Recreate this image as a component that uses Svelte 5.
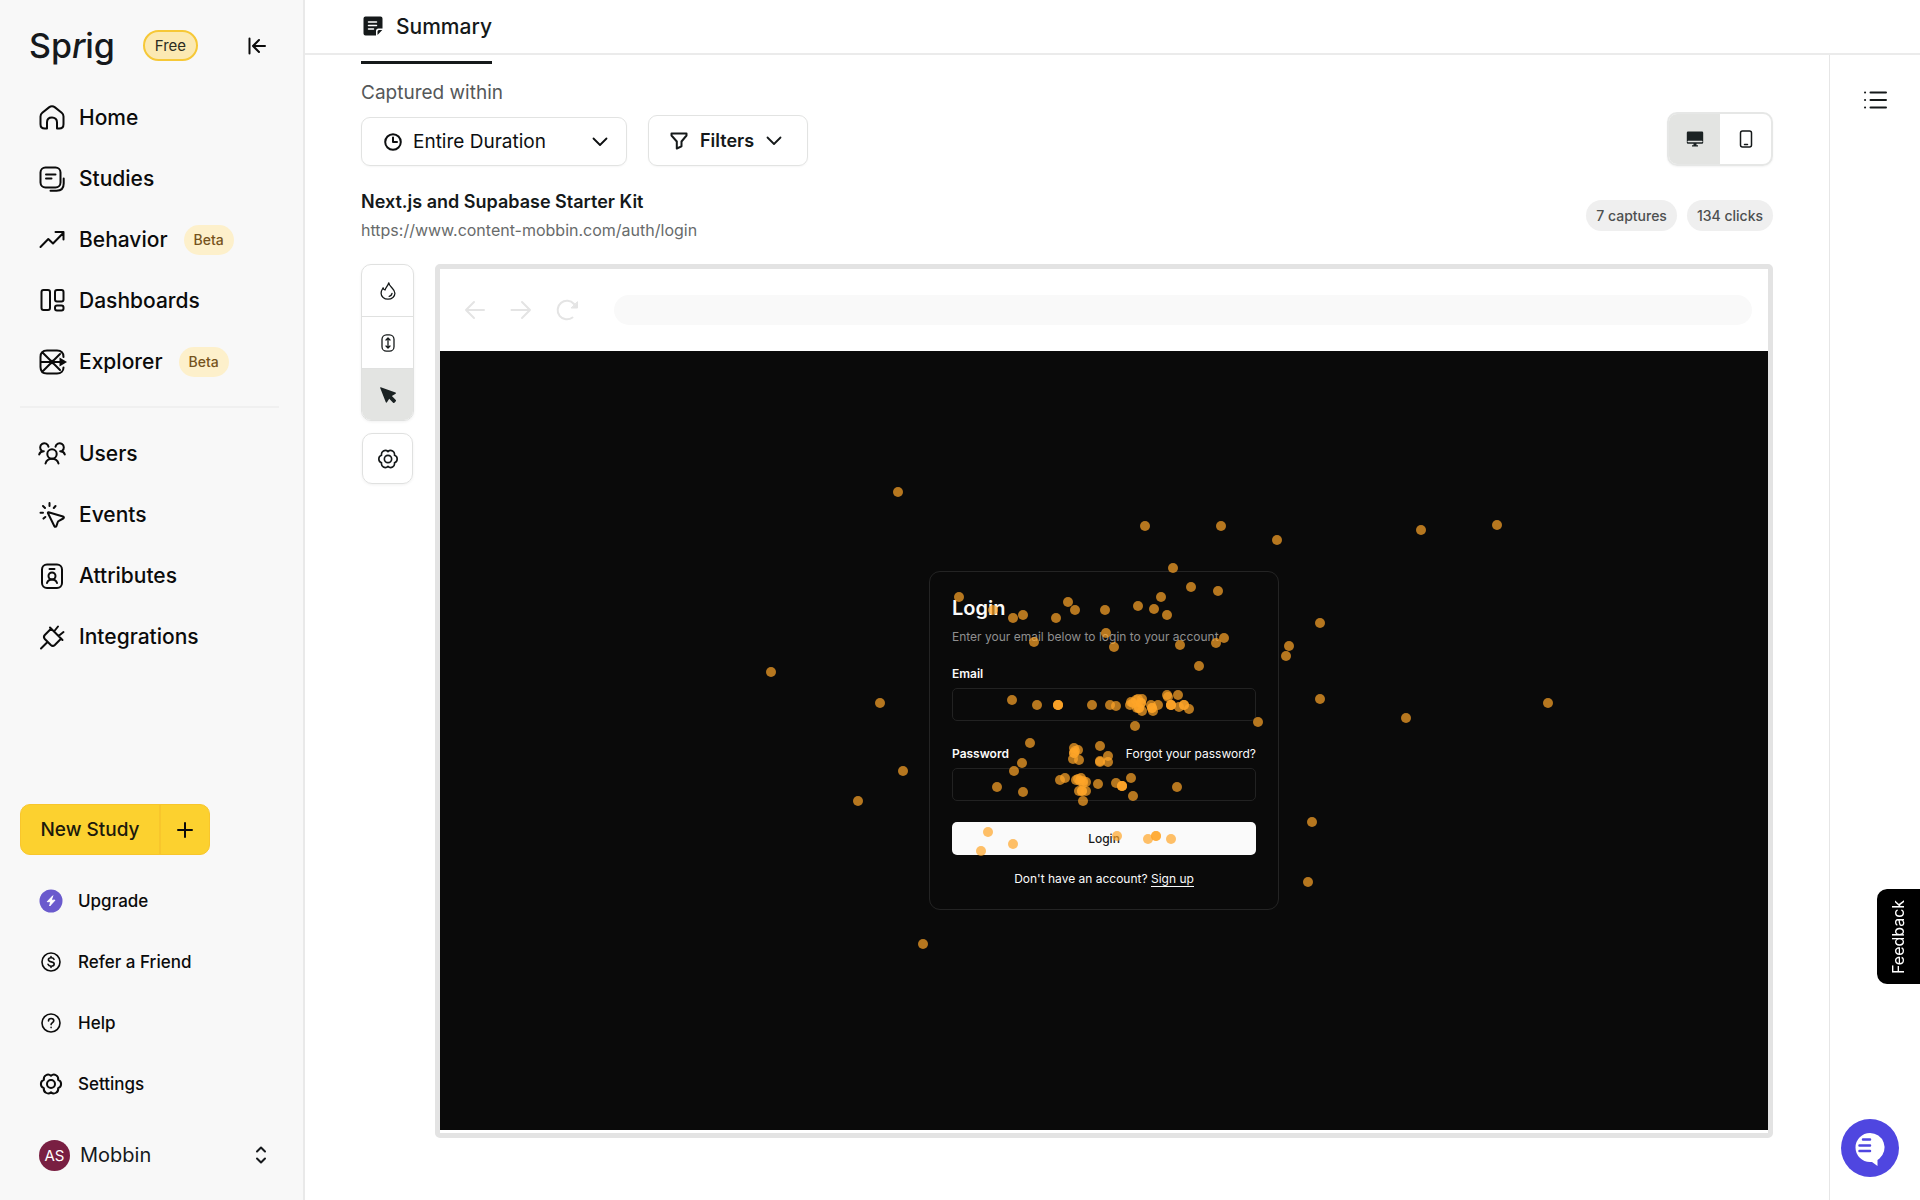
<script lang="ts">
  type Point = [x: number, y: number, hits?: number];

  const mainNav = [
    { label: 'Home', icon: 'home', beta: false },
    { label: 'Studies', icon: 'studies', beta: false },
    { label: 'Behavior', icon: 'behavior', beta: true },
    { label: 'Dashboards', icon: 'dashboards', beta: false },
    { label: 'Explorer', icon: 'explorer', beta: true },
  ];

  const dataNav = [
    { label: 'Users', icon: 'users', beta: false },
    { label: 'Events', icon: 'events', beta: false },
    { label: 'Attributes', icon: 'attributes', beta: false },
    { label: 'Integrations', icon: 'integrations', beta: false },
  ];

  const footerNav = [
    { label: 'Upgrade', icon: 'upgrade' },
    { label: 'Refer a Friend', icon: 'refer' },
    { label: 'Help', icon: 'help' },
    { label: 'Settings', icon: 'gear' },
  ];

  const tools = [
    { id: 'heat', label: 'Heatmap' },
    { id: 'scroll', label: 'Scroll depth' },
    { id: 'clicks', label: 'Clicks' },
  ];

  let tool = $state('clicks');
  let device = $state('desktop');
  let duration = $state('Entire Duration');

  // Recorded clicks, in captured-page pixels. Third value = repeated clicks.
  const STAGE_W = 1328;
  const STAGE_H = 779;
  const clicks: Point[] = [
    [458, 141], [705, 175], [781, 175], [837, 189], [981, 179], [1057, 174],
    [880, 272], [849, 295], [846, 305], [880, 348], [966, 367], [1108, 352],
    [331, 321], [440, 352], [463, 420], [418, 450], [872, 471], [868, 531], [483, 593],
    // heading and description
    [733, 217], [751, 236], [778, 240], [519, 246], [553, 259], [573, 267], [583, 264],
    [616, 267], [628, 251], [635, 259], [665, 259], [698, 255], [714, 258], [721, 246],
    [727, 264], [666, 282], [674, 296], [594, 291], [740, 294], [776, 292], [784, 287], [759, 315],
    // email field
    [572, 349], [597, 354], [618, 354, 3], [652, 354], [670, 354], [676, 355],
    [690, 354], [691, 351], [696, 349], [698, 348], [702, 348], [701, 352, 2], [699, 357, 2],
    [697, 357], [702, 360], [693, 352], [711, 354], [712, 357, 2], [713, 360], [718, 354],
    [727, 344], [728, 346], [738, 344], [731, 354, 3], [739, 356], [744, 354, 2], [749, 358],
    [695, 375], [818, 371],
    // password field
    [590, 392], [582, 412], [574, 420], [557, 436], [583, 441],
    [634, 397], [638, 399], [634, 402, 2], [635, 400], [633, 408], [639, 409],
    [660, 395], [660, 410], [660, 411], [668, 405], [668, 411],
    [620, 429], [625, 427], [636, 429], [638, 428], [641, 427], [643, 430], [646, 431],
    [640, 430], [643, 432], [639, 440], [642, 440, 2], [646, 440], [643, 450],
    [658, 433], [676, 432], [682, 435, 3], [691, 427], [693, 445], [737, 436],
    // submit button
    [548, 481], [573, 493], [541, 500], [677, 485], [708, 488], [716, 485, 2], [731, 488],
  ];

  const dots = clicks.flatMap(([x, y, hits = 1]) => Array.from({ length: hits }, () => ({ x, y })));
</script>

{#snippet gear()}
  <path d="M12 3.8A4.3 4.3 0 0 1 19.1 7.9A4.3 4.3 0 0 1 19.1 16.1A4.3 4.3 0 0 1 12 20.2A4.3 4.3 0 0 1 4.9 16.1A4.3 4.3 0 0 1 4.9 7.9A4.3 4.3 0 0 1 12 3.8Z" />
  <circle cx="12" cy="12" r="4" />
{/snippet}

{#snippet navIcon(name: string)}
  <svg class="icon" viewBox="0 0 26 26" aria-hidden="true">
    {#if name === 'home'}
      <path d="M1.5 11.5c0-1.5.6-2.7 1.8-3.7l6.7-5.400c1.800-1.400 4.200-1.400 6 0l6.700 5.400c1.200 1 1.800 2.200 1.800 3.700v7.700c0 2.800-1.800 4.300-4.300 4.300H18v-6.200c0-2.900-2-4.800-5-4.800s-5 1.900-5 4.800v6.200H5.800c-2.500 0-4.300-1.500-4.300-4.300Z" />
    {:else if name === 'studies'}
      <rect x="1.5" y="1.500" width="20" height="20" rx="5" />
      <path d="M7 8.500h9.500M7 12.500h5.500M24.700 12.500v5c0 4.500-2.700 7.200-7.200 7.200h-6" />
    {:else if name === 'behavior'}
      <path d="m1.500 20 7.800-8 4.700 4.500L24 6.200M16.500 5H24.500v7.500" />
    {:else if name === 'dashboards'}
      <rect x="2.500" y="2" width="8.500" height="20" rx="2" />
      <rect x="16" y="2" width="8.500" height="11.500" rx="2" />
      <rect x="16" y="17.500" width="8.500" height="5" rx="2" />
    {:else if name === 'explorer'}
      <path d="M24.500 8C24.500 4 22 1.500 18 1.500H8c-4 0-6.500 2.500-6.500 6.500v10c0 4 2.500 6.500 6.500 6.500h10c4 0 6.500-2.500 6.500-6M1.500 13H22M3.500 3.500l7.500 7.500q2 2 4 0L21 5M3.500 22.500l7.500-7.500q2-2 4 0L21 21" />
      <path class="solid" d="m20.500 8.500 7.500 4.500-7.500 4.500Z" />
    {:else if name === 'users'}
      <circle cx="13" cy="13" r="4.700" />
      <path d="M6.500 22.500C7.300 19.500 9.500 17.700 13 17.700s5.700 1.800 6.500 4.800M2.800 9.800A4.200 4.200 0 1 1 9.500 5.700M.2 13.500c.5-2 1.900-3.200 4.600-3.300M23.200 9.800a4.200 4.200 0 1 0-6.700-4.100M25.800 13.500c-.5-2-1.900-3.200-4.600-3.300" />
    {:else if name === 'events'}
      <path d="M9.500 10.200 24 14.500c1.200.4 1.200 1.500.2 2l-4.300 2.300c-.6.3-1 .8-1.200 1.400l-1.300 3.900c-.4 1-1.500 1-2 .1L9 11.300c-.3-.7 0-1.200.5-1.100ZM10.500 1V4M16.500 4l-1.700 2M4 4l2 2M1.500 10.700H4M6.300 15l-1.800 1.600" />
    {:else if name === 'attributes'}
      <rect x="3" y="1.500" width="20" height="23.500" rx="5" />
      <circle cx="13" cy="13" r="3.500" />
      <path d="M8 20c.8-2.300 2.500-3.400 5-3.400s4.200 1.100 5 3.400M10.500 6h5" />
    {:else if name === 'integrations'}
      <path d="m2 24.500 6-6M11 3.500 23.500 16M12 4.800 5.800 11q-1.800 2 0 4l6 6q2 1.800 4 0L22 14.800M15 7.500l4-5M19.500 12l5-4" />
    {:else if name === 'upgrade'}
      <circle class="purple" cx="13" cy="13" r="11.500" />
      <path class="white" d="m14.600 8-5.400 5.700h3.400l-.9 4.300 5.300-5.800h-3.400Z" />
    {:else if name === 'refer'}
      <g class="thin">
        <circle cx="13" cy="13" r="9" />
        <path d="M16 10.300c-.4-1-1.300-1.500-2.800-1.500-1.700 0-2.800.7-2.800 2 0 3.100 5.800 1 5.800 4.200 0 1.400-1.200 2.200-3 2.200-1.700 0-2.800-.7-3.200-1.900M13 7.500v1.300M13 17.200v1.300" />
      </g>
    {:else if name === 'help'}
      <g class="thin">
        <circle cx="13" cy="13" r="9" />
        <path d="M10.500 11c0-1.500 1-2.500 2.600-2.500s2.700.9 2.700 2.300c0 1.900-2.700 1.900-2.700 3.800M13.100 17.400v.2" />
      </g>
    {:else if name === 'gear'}
      <g class="gear" transform="translate(1 1)">{@render gear()}</g>
    {/if}
  </svg>
{/snippet}

{#snippet navList(items: typeof mainNav)}
  <ul>
    {#each items as item}
      <li>
        <a class="nav-link" href="#{item.icon}">
          {@render navIcon(item.icon)}
          <span>{item.label}</span>
          {#if item.beta}<span class="beta">Beta</span>{/if}
        </a>
      </li>
    {/each}
  </ul>
{/snippet}

{#snippet chevron()}
  <svg class="chevron" viewBox="0 0 16 16" aria-hidden="true"><path d="m1.500 4.500 6.500 6.500 6.500-6.500" /></svg>
{/snippet}

<div class="app">
  <aside class="sidebar">
    <div class="brand">
      <a class="logo" href="#home">Sp<i>r</i>ig</a>
      <span class="plan">Free</span>
      <button class="collapse" aria-label="Collapse sidebar">
        <svg viewBox="0 0 18 18" aria-hidden="true"><path d="M1.500 1.500v15M17 9H5.500M11 3 5 9l6 6" /></svg>
      </button>
    </div>

    <nav aria-label="Main">
      {@render navList(mainNav)}
      <hr />
      {@render navList(dataNav)}
    </nav>

    <div class="sidebar-foot">
      <div class="new-study">
        <button class="new-main">New Study</button>
        <button class="new-plus" aria-label="Add">
          <svg viewBox="0 0 16 16" aria-hidden="true"><path d="M8 1v14M1 8h14" /></svg>
        </button>
      </div>
      <ul>
        {#each footerNav as item}
          <li>
            <a class="foot-link" href="#{item.icon}">{@render navIcon(item.icon)}<span>{item.label}</span></a>
          </li>
        {/each}
      </ul>
      <button class="account">
        <span class="avatar">AS</span>
        <span>Mobbin</span>
        <svg viewBox="0 0 12 18" aria-hidden="true"><path d="m2 5.500 4-4 4 4M2 12.500l4 4 4-4" /></svg>
      </button>
    </div>
  </aside>

  <div class="page">
    <header class="tabs">
      <a class="tab" href="#summary">
        <svg viewBox="0 0 20 20" aria-hidden="true">
          <path class="sheet" d="M2.500.5h15a2 2 0 0 1 2 2v10h-4a2.500 2.500 0 0 0-2.500 2.500v4.500H2.500a2 2 0 0 1-2-2v-15a2 2 0 0 1 2-2ZM14.500 19v-3.500a1.500 1.500 0 0 1 1.500-1.500h3.300Z" />
          <path class="lines" d="M5.500 6h8M5.500 9.500h8M5.500 13h5" />
        </svg>
        <span>Summary</span>
      </a>
    </header>

    <div class="body">
      <main>
        <div class="controls">
          <div class="field">
            <label for="duration">Captured within</label>
            <div class="select">
              <svg viewBox="0 0 18 18" aria-hidden="true"><circle cx="9" cy="9" r="7.800" /><path d="M9 4.500V9h4" /></svg>
              <select id="duration" bind:value={duration}>
                <option>Entire Duration</option>
              </select>
              {@render chevron()}
            </div>
          </div>
          <button class="filters">
            <svg class="funnel" viewBox="0 0 18 18" aria-hidden="true">
              <path d="M1.500 1.500h15v2L11.500 9.500v4.800L6.800 16.500v-7L1.500 3.500Z" />
            </svg>
            <span>Filters</span>
            {@render chevron()}
          </button>
          <div class="devices" role="group" aria-label="Device">
            <button aria-label="Desktop" aria-pressed={device === 'desktop'} onclick={() => (device = 'desktop')}>
              <svg viewBox="0 0 18 18" aria-hidden="true">
                <path class="ink" d="M2 1.500h14a1.200 1.200 0 0 1 1.200 1.200v9.800a1.200 1.200 0 0 1-1.200 1.200h-5.500v1.500h1.500v1.300H6v-1.300h1.500v-1.500H2A1.200 1.200 0 0 1 .8 12.500V2.700A1.200 1.200 0 0 1 2 1.500Z" />
                <path class="gap" d="M2.200 11.600h13.600" />
              </svg>
            </button>
            <button aria-label="Mobile" aria-pressed={device === 'mobile'} onclick={() => (device = 'mobile')}>
              <svg viewBox="0 0 18 18" aria-hidden="true">
                <rect x="3.500" y="1" width="11" height="16" rx="2" />
                <path d="M7.500 14.500h3" />
              </svg>
            </button>
          </div>
        </div>

        <div class="heading">
          <div>
            <h1>Next.js and Supabase Starter Kit</h1>
            <p>https://www.content-mobbin.com/auth/login</p>
          </div>
          <div class="chips">
            <span class="chip">7 captures</span>
            <span class="chip">134 clicks</span>
          </div>
        </div>

        <div class="viewer">
          <div class="tools">
            <div class="tool-group" role="group" aria-label="Map type">
              {#each tools as t}
                <button aria-label={t.label} aria-pressed={tool === t.id} onclick={() => (tool = t.id)}>
                  <svg viewBox="0 0 18 18" aria-hidden="true">
                    {#if t.id === 'heat'}
                      <path d="M9.800.8c.2 2.300 1.700 3.500 3.300 5.200 1.700 1.800 2.800 3.300 2.800 5.200 0 3.500-3 6-6.900 6s-6.900-2.500-6.900-6C2.100 8.800 3.200 7.200 4.100 5.800c.3 1.200.9 1.900 1.900 2.200C6.800 5.200 8.900 4 9.800.8Z" />
                      <path d="M13 11.500c-.3 1.500-1.300 2.500-2.800 2.800" />
                    {:else if t.id === 'scroll'}
                      <rect x="3" y=".8" width="12" height="16.400" rx="4.500" />
                      <path d="M9 4.200v9.600M7 6l2-2 2 2M7 12l2 2 2-2" />
                    {:else}
                      <path class="ink" d="M1.800 1.200 16.500 6.500c.6.300.6.900.1 1.200l-3.700 2.400 3.900 3.900c.4.4.4.900 0 1.300l-1.400 1.400c-.4.4-.9.400-1.300 0l-3.900-3.900L8 16.300c-.3.500-1 .5-1.200-.1L1.200 2c-.2-.6.1-1 .6-.8Z" />
                    {/if}
                  </svg>
                </button>
              {/each}
            </div>
            <button class="tool-settings" aria-label="Map settings">
              <svg viewBox="1 1 22 22" aria-hidden="true">{@render gear()}</svg>
            </button>
          </div>

          <div class="frame">
            <div class="browser-bar">
              <svg viewBox="0 0 22 22" aria-hidden="true"><path d="M20 11H2M10 3l-8 8 8 8" /></svg>
              <svg viewBox="0 0 22 22" aria-hidden="true"><path d="M1.500 11H20M12 3l8 8-8 8" /></svg>
              <svg viewBox="0 0 22 22" aria-hidden="true">
                <path d="M16.500 18.500A9.300 9.300 0 1 1 18 5" />
                <path class="head" d="M21.500 3v6h-6Z" />
              </svg>
              <div class="address"></div>
            </div>

            <div class="stage">
              <form class="login" onsubmit={(e) => e.preventDefault()}>
                <h2>Login</h2>
                <p class="hint">Enter your email below to login to your account</p>
                <div class="row"><label for="email">Email</label></div>
                <input id="email" type="email" />
                <div class="row">
                  <label for="password">Password</label>
                  <a href="#forgot">Forgot your password?</a>
                </div>
                <input id="password" type="password" />
                <button>Login</button>
                <p class="signup">Don't have an account? <a href="#signup">Sign up</a></p>
              </form>

              <svg class="dots" viewBox="0 0 {STAGE_W} {STAGE_H}" aria-hidden="true">
                {#each dots as dot}
                  <circle cx={dot.x} cy={dot.y} r="5" />
                {/each}
              </svg>
            </div>
          </div>
        </div>
      </main>

      <div class="rail">
        <button aria-label="Show list">
          <svg viewBox="0 0 24 20" aria-hidden="true">
            <path d="M7.500 2.500H23M7.500 10H23M7.500 17.500H23M2 2.500h.1M2 10h.1M2 17.500h.1" />
          </svg>
        </button>
      </div>
    </div>
  </div>

  <button class="feedback">Feedback</button>
  <button class="chat" aria-label="Open chat">
    <svg viewBox="0 0 58 58" aria-hidden="true">
      <path class="bubble" d="M29 14a14.500 14.500 0 0 1 9.500 25.500L36.500 41v6L31 43h-2a14.500 14.500 0 0 1 0-29Z" />
      <path class="bars" d="M22 20.500h7M18.500 26.500h10.500M18.500 32h10.500" />
    </svg>
  </button>
</div>

<style>
  :global(body) {
    background: #fff;
  }

  .app {
    display: flex;
    min-height: 100vh;
    font-family: Inter, 'Liberation Sans', sans-serif;
    color: #15191a;
  }

  .app * {
    box-sizing: border-box;
  }

  button,
  select,
  input {
    font: inherit;
    color: inherit;
  }

  button {
    padding: 0;
    border: 0;
    background: none;
    cursor: pointer;
  }

  a {
    color: inherit;
    text-decoration: none;
  }

  ul,
  p,
  h1,
  h2 {
    margin: 0;
    padding: 0;
    list-style: none;
  }

  svg {
    display: block;
    flex: none;
    fill: none;
    stroke: currentColor;
    stroke-width: 2;
    stroke-linecap: round;
    stroke-linejoin: round;
  }

  /* Sidebar */
  .sidebar {
    position: sticky;
    top: 0;
    display: flex;
    flex-direction: column;
    flex: none;
    width: 305px;
    height: 100vh;
    padding: 20px 24px 21px 20px;
    border-right: 2px solid #e9e9e9;
    background: #f8f8f8;
    color: #0b0b0b;
  }

  .brand {
    display: flex;
    align-items: center;
    height: 51px;
    padding: 0 13px 0 9px;
    margin-bottom: 16px;
  }

  .logo {
    font-size: 34px;
    line-height: 40px;
    font-weight: 500;
    color: #16191c;
  }

  .plan {
    margin-left: 28px;
    padding: 0 10px;
    border: 2px solid #f6c837;
    border-radius: 16px;
    background: #fbe9b2;
    font-size: 15px;
    line-height: 27px;
    color: #2c2c22;
  }

  .collapse {
    margin-left: auto;
  }

  .collapse svg {
    width: 18px;
    height: 18px;
  }

  .nav-link,
  .foot-link {
    display: flex;
    align-items: center;
    height: 61px;
  }

  .nav-link {
    gap: 14px;
    padding-left: 19px;
    font-size: 21px;
    font-weight: 500;
  }

  .icon {
    width: 26px;
    height: 26px;
    overflow: visible;
  }

  .icon .solid {
    fill: currentColor;
    stroke: none;
  }

  .icon .purple {
    fill: #6a5acd;
    stroke: none;
  }

  .icon .white {
    fill: #fff;
    stroke: #fff;
    stroke-width: 1;
  }

  .icon .thin {
    stroke-width: 1.6;
  }

  .beta {
    padding: 0 10px;
    margin-left: 2px;
    border-radius: 15px;
    background: #fdf0cb;
    font-size: 14px;
    line-height: 30px;
    color: #76531c;
  }

  hr {
    height: 2px;
    margin: 14px 0 15px;
    border: 0;
    background: #f0f0f0;
  }

  .sidebar-foot {
    margin-top: auto;
  }

  .new-study {
    display: inline-flex;
    height: 51px;
    margin-bottom: 15px;
    border: 1px solid #f8c62c;
    border-radius: 10px;
    background: #fcd12f;
    overflow: hidden;
    vertical-align: top;
  }

  .new-main {
    width: 140px;
    border-right: 2px solid #f8c62c;
    font-size: 19px;
    font-weight: 500;
    color: #1d1a0c;
  }

  .new-plus {
    display: grid;
    place-items: center;
    width: 48px;
  }

  .new-plus svg {
    width: 16px;
    height: 16px;
  }

  .foot-link {
    gap: 14px;
    padding-left: 18px;
    font-size: 17px;
    font-weight: 500;
  }

  .account {
    display: flex;
    align-items: center;
    gap: 10px;
    width: 100%;
    height: 48px;
    padding: 0 12px 0 19px;
    margin-top: 17px;
    font-size: 20px;
    color: #16191c;
  }

  .account svg {
    width: 12px;
    height: 18px;
    margin-left: auto;
  }

  .avatar {
    display: grid;
    place-items: center;
    width: 31px;
    height: 31px;
    border-radius: 50%;
    background: #791f42;
    font-size: 15px;
    color: #fff;
  }

  /* Header tabs */
  .page {
    display: flex;
    flex-direction: column;
    flex: 1;
    min-width: 0;
  }

  .tabs {
    display: flex;
    align-items: flex-start;
    height: 55px;
    padding-left: 56px;
    border-bottom: 2px solid #ebebeb;
  }

  .tab {
    display: flex;
    align-items: center;
    gap: 13px;
    height: 64px;
    padding: 0 0 9px 2px;
    border-bottom: 3px solid #15191a;
    font-size: 21px;
    font-weight: 500;
  }

  .tab svg {
    width: 20px;
    height: 20px;
  }

  .tab .sheet {
    fill: #15191a;
    stroke: none;
  }

  .tab .lines {
    stroke: #fff;
    stroke-width: 1.5;
  }

  .body {
    display: flex;
    flex: 1;
  }

  main {
    flex: 1;
    min-width: 0;
    padding: 26px 56px 40px;
  }

  /* Filter row */
  .controls {
    display: flex;
    align-items: flex-end;
  }

  .field {
    display: flex;
    flex-direction: column;
    gap: 12px;
    width: 266px;
  }

  .field label {
    font-size: 19px;
    line-height: 24px;
    color: #555859;
  }

  .select {
    display: flex;
    align-items: center;
    gap: 11px;
    height: 49px;
    padding: 0 18px 0 22px;
    border: 1px solid #e2e3e2;
    border-radius: 9px;
    box-shadow: 0 1px 2px rgba(0, 0, 0, 0.04);
    color: #0d0f10;
  }

  .select svg,
  .funnel {
    width: 18px;
    height: 18px;
  }

  .select select {
    flex: 1;
    min-width: 0;
    padding: 0;
    border: 0;
    background: none;
    appearance: none;
    font-size: 19px;
    line-height: 24px;
  }

  .select .chevron,
  .filters .chevron {
    width: 16px;
    height: 16px;
    stroke-width: 1.8;
  }

  .filters {
    display: flex;
    align-items: center;
    gap: 12px;
    width: 160px;
    height: 51px;
    padding: 0 0 0 21px;
    margin-left: 21px;
    border: 1px solid #e2e3e2;
    border-radius: 9px;
    box-shadow: 0 1px 2px rgba(0, 0, 0, 0.04);
    font-size: 18px;
    font-weight: 600;
  }

  .devices {
    display: flex;
    width: 106px;
    height: 54px;
    margin-left: auto;
    border: 2px solid #e6e7e6;
    border-radius: 10px;
    box-shadow: 0 1px 2px rgba(0, 0, 0, 0.05);
    overflow: hidden;
  }

  .devices button {
    display: grid;
    place-items: center;
    flex: 1;
  }

  .devices svg {
    width: 18px;
    height: 18px;
    stroke-width: 1.5;
  }

  button[aria-pressed='true'] {
    background: #e3e4e2;
  }

  svg .ink {
    fill: #1b2223;
    stroke: none;
  }

  .devices .gap {
    stroke: #e3e4e2;
  }

  .heading {
    display: flex;
    align-items: center;
    justify-content: space-between;
    margin: 22px 0 20px;
  }

  h1 {
    font-size: 18px;
    line-height: 28px;
    font-weight: 600;
  }

  .heading p {
    font-size: 16px;
    line-height: 28px;
    color: #686b6b;
  }

  .chips {
    display: flex;
    gap: 10px;
    padding-bottom: 2px;
  }

  .chip {
    padding: 0 10px;
    border-radius: 16px;
    background: #efefef;
    font-size: 14px;
    line-height: 31px;
    font-weight: 500;
    color: #4d5050;
  }

  /* Capture viewer */
  .viewer {
    display: flex;
    align-items: flex-start;
    gap: 21px;
  }

  .tools {
    display: flex;
    flex-direction: column;
    align-items: center;
    gap: 12px;
    width: 53px;
    flex: none;
  }

  .tool-group {
    display: flex;
    flex-direction: column;
    width: 100%;
    height: 157px;
    border: 1px solid #e0e1e0;
    border-radius: 10px;
    box-shadow: 0 1px 3px rgba(0, 0, 0, 0.06);
    overflow: hidden;
  }

  .tools button {
    display: grid;
    place-items: center;
  }

  .tool-group button {
    flex: 1;
  }

  .tool-group button + button {
    border-top: 1px solid #e0e1e0;
  }

  .tools svg {
    width: 18px;
    height: 18px;
    stroke-width: 1.3;
  }

  .tools .tool-settings {
    width: 51px;
    height: 51px;
    border: 1px solid #e0e1e0;
    border-radius: 10px;
    box-shadow: 0 1px 3px rgba(0, 0, 0, 0.06);
  }

  .tools .tool-settings svg {
    width: 20px;
    height: 20px;
    stroke-width: 1.8;
  }

  .frame {
    flex: 1;
    min-width: 0;
    padding-bottom: 3px;
    border: 5px solid #e3e3e3;
    border-radius: 5px;
  }

  .browser-bar {
    display: flex;
    align-items: center;
    gap: 24px;
    height: 82px;
    padding: 0 16px 0 24px;
    color: #e4e4e4;
  }

  .browser-bar svg {
    width: 22px;
    height: 22px;
  }

  .browser-bar .head {
    fill: currentColor;
    stroke-width: 1;
  }

  .address {
    flex: 1;
    height: 30px;
    margin-left: 12px;
    border-radius: 15px;
    background: #f9f9f9;
  }

  .stage {
    position: relative;
    display: grid;
    place-items: center;
    aspect-ratio: 1328 / 779;
    background: #0a0a0a;
    color: #fafafa;
  }

  .dots {
    position: absolute;
    inset: 0;
    width: 100%;
    height: 100%;
    pointer-events: none;
  }

  .dots circle {
    fill: rgba(255, 165, 40, 0.7);
    stroke: none;
  }

  .login {
    width: 350px;
    padding: 22px 22px 20px;
    border: 1px solid #242424;
    border-radius: 11px;
    font-size: 12px;
    line-height: 20px;
  }

  .login h2 {
    font-size: 20px;
    line-height: 28px;
    font-weight: 600;
  }

  .login .hint {
    margin-top: 5px;
    color: #8f8f8f;
  }

  .login .row {
    display: flex;
    justify-content: space-between;
    margin: 17px 0 4px;
  }

  .login label {
    font-weight: 600;
  }

  .login input {
    display: block;
    width: 100%;
    height: 33px;
    padding: 0 10px;
    border: 1px solid #222;
    border-radius: 5px;
    background: none;
  }

  .login input + .row {
    margin-top: 23px;
  }

  .login button {
    display: block;
    width: 100%;
    height: 33px;
    margin: 21px 0 14px;
    border-radius: 5px;
    background: #fafafa;
    font-weight: 500;
    color: #171717;
  }

  .login .signup {
    text-align: center;
  }

  .signup a {
    border-bottom: 1px solid #fafafa;
  }

  /* Right rail */
  .rail {
    flex: none;
    width: 91px;
    padding-top: 35px;
    border-left: 1px solid #e6e6e6;
  }

  .rail button {
    display: block;
    margin: 0 auto;
  }

  .rail svg {
    width: 24px;
    height: 20px;
  }

  .feedback {
    position: fixed;
    right: 0;
    top: 889px;
    width: 43px;
    height: 95px;
    border-radius: 0 10px 10px 0;
    background: #000;
    font-size: 16px;
    color: #fff;
    writing-mode: vertical-rl;
    transform: rotate(180deg);
  }

  .chat {
    position: fixed;
    right: 21px;
    bottom: 23px;
    border-radius: 50%;
    background: #4f46e0;
  }

  .chat svg {
    width: 58px;
    height: 58px;
    stroke: none;
  }

  .chat .bubble {
    fill: #fff;
  }

  .chat .bars {
    stroke: #4f46e0;
    stroke-width: 2.5;
  }
</style>
